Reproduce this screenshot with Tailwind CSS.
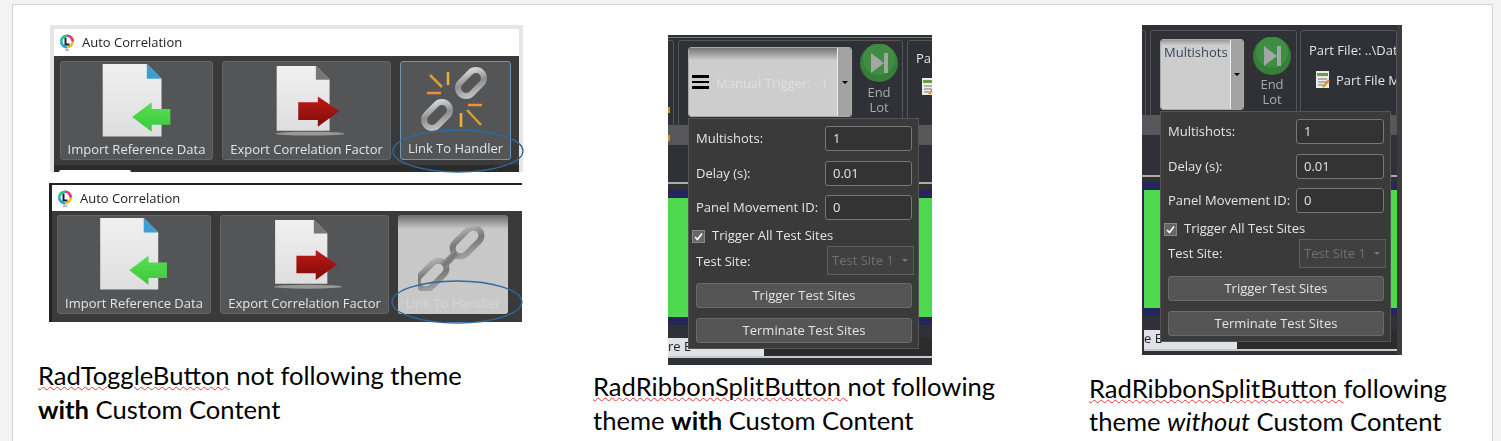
<!doctype html>
<html><head><meta charset="utf-8"><script src="https://cdn.jsdelivr.net/npm/@tailwindcss/browser@4"></script></head>
<body class="w-[1501px] h-[441px] overflow-hidden bg-[#f3f3f3]">
<svg width="0" height="0" class="absolute"><defs>
<linearGradient id="pg" x1="0" y1="0" x2="0" y2="1"><stop offset="0" stop-color="#f0f0f0"/><stop offset="1" stop-color="#dedede"/></linearGradient>
<linearGradient id="gr" x1="0" y1="0" x2="0" y2="1"><stop offset="0" stop-color="#58e050"/><stop offset="1" stop-color="#3cc83c"/></linearGradient>
<linearGradient id="rd" x1="0" y1="0" x2="0" y2="1"><stop offset="0" stop-color="#c01a14"/><stop offset="1" stop-color="#7c0c0a"/></linearGradient>
<linearGradient id="ch" x1="0" y1="0" x2="1" y2="1"><stop offset="0" stop-color="#dcdcdc"/><stop offset=".5" stop-color="#8e8e8e"/><stop offset="1" stop-color="#c4c4c4"/></linearGradient>
<linearGradient id="ch2" x1="0" y1="0" x2="1" y2="1"><stop offset="0" stop-color="#b4b4b4"/><stop offset=".5" stop-color="#767676"/><stop offset="1" stop-color="#a4a4a4"/></linearGradient>
<symbol id="logo" viewBox="0 0 16 18"><circle cx="8" cy="7.5" r="7" fill="#f0c020"/><path d="M8 .5A7 7 0 0 0 1 7.5h7z" fill="#22c4a0"/><path d="M8 .5A7 7 0 0 1 15 7.5H8z" fill="#e8308c"/><path d="M1 7.5A7 7 0 0 0 8 14.5V7.5z" fill="#20a8e8"/><circle cx="8" cy="7.5" r="4.4" fill="#fff"/><path d="M6.5 3.5v7h4" fill="none" stroke="#222" stroke-width="2"/><rect x="6" y="15" width="4" height="2" fill="#bbb"/></symbol>
<symbol id="imp" viewBox="0 0 72 76"><path d="M0 0H45L60 15V74H0z" fill="url(#pg)"/><path d="M45 0L60 15H45z" fill="#3b9ed6"/><path d="M30 54L50 39V46H69V62H50V69z" fill="url(#gr)"/></symbol>
<symbol id="exp" viewBox="0 0 72 76"><path d="M2 0H42L56 14V66H2z" fill="url(#pg)"/><path d="M42 0L56 14H42z" fill="#777"/><path d="M24 37H44V31L66 46L44 62V55H24z" fill="url(#rd)"/><ellipse cx="36" cy="69" rx="35" ry="2" fill="#999"/></symbol>
<symbol id="broken" viewBox="0 0 70 70" fill="none"><g stroke="url(#ch)" stroke-width="6"><rect x="-8" y="-15" width="16" height="30" rx="8" transform="translate(50 20) rotate(45)"/><rect x="-8" y="-15" width="16" height="30" rx="8" transform="translate(16 52) rotate(45)"/></g><g stroke-width="2.5"><path d="M9 12L21 24" stroke="#d8a030"/><path d="M27 9V22" stroke="#e8b040"/><path d="M6 30H20" stroke="#f09030"/><path d="M47 42H61" stroke="#f09030"/><path d="M46 47L60 62" stroke="#d8a030"/><path d="M40 50V64" stroke="#e8b040"/></g></symbol>
<symbol id="chain" viewBox="0 0 70 70" fill="none"><g stroke="url(#ch2)" stroke-width="6"><rect x="-8" y="-17" width="16" height="34" rx="8" transform="translate(49 21) rotate(45)"/><rect x="-8" y="-17" width="16" height="34" rx="8" transform="translate(14 54) rotate(45)"/><path d="M25 45L38 32" stroke-width="7"/></g></symbol>
<symbol id="play" viewBox="0 0 38 38"><circle cx="19" cy="19" r="19" fill="#357f39"/><circle cx="19" cy="15" r="16" fill="#4a9c4c" opacity=".5"/><path d="M11 9L24 19L11 29z" fill="#a3a7a3"/><rect x="24" y="9" width="4" height="20" fill="#a3a7a3"/></symbol>
<symbol id="pf" viewBox="0 0 14 18"><rect width="13" height="17" fill="#ececec"/><rect x="1" y="2" width="11" height="3" fill="#6a9e3a"/><path d="M2 8H11M2 11H11M2 14H7" stroke="#777"/><path d="M7 16L13 9" stroke="#e09020" stroke-width="2.4"/></symbol>
</defs></svg>

<main class="relative w-full h-full font-['Open_Sans',sans-serif]">
  <div class="absolute left-[12px] top-[4px] w-[1481px] h-[437px] bg-white border border-b-0 border-[#d2d2d2]"></div>

  <!-- Picture 1 -->
  <section class="absolute left-[50px] top-[25px] w-[473px] h-[147px] bg-[#e6e6e6] p-[4px] pb-0 flex flex-col blur-[0.4px]">
    <header class="h-[27px] bg-white flex items-center gap-[7px] pl-[5px] pt-[1px] text-[13px] text-[#222] shrink-0 rounded-t-[2px]"><svg width="16" height="18"><use href="#logo"/></svg>Auto Correlation</header>
    <div class="flex-1 bg-[#3a3a3a] pl-[6px] pt-[5px] relative">
      <div class="flex gap-[9px]">
        <button class="w-[153px] h-[99px] rounded-[3px] bg-[#545557] border border-[#656565] flex flex-col items-center text-[13px] text-[#e4e4e4]"><svg width="72" height="76" class="mt-[2px] ml-[2px]"><use href="#imp"/></svg><span class="mt-[1px]">Import Reference Data</span></button>
        <button class="w-[169px] h-[99px] rounded-[3px] bg-[#545557] border border-[#656565] flex flex-col items-center text-[13px] text-[#e4e4e4]"><svg width="72" height="76" class="mt-[4px] ml-[6px]"><use href="#exp"/></svg><span class="-mt-[1px]">Export Correlation Factor</span></button>
        <button class="w-[111px] h-[99px] rounded-[3px] bg-[#545557] border border-[#6f95b4] flex flex-col items-center text-[13px] text-[#e4e4e4]"><svg width="70" height="70" class="mt-[1px]"><use href="#broken"/></svg><span class="mt-[6px]">Link To Handler</span></button>
      </div>
      <div class="absolute left-0 right-0 bottom-0 h-[7px] bg-[#2b2b2b]"><div class="ml-[5px] mt-[5px] w-[72px] h-[2px] bg-white rounded-t-[2px]"></div></div>
    </div>
  </section>

  <!-- Picture 2 -->
  <section class="absolute left-[49px] top-[183px] w-[473px] h-[139px] bg-[#222] pl-[3px] pt-[2px] flex flex-col blur-[0.4px]">
    <header class="h-[26px] bg-white flex items-center gap-[7px] pl-[5px] pt-[1px] text-[13px] text-[#222] shrink-0"><svg width="16" height="18"><use href="#logo"/></svg>Auto Correlation</header>
    <div class="flex-1 bg-[#3a3a3a] pl-[5px] pt-[4px]">
      <div class="flex gap-[9px]">
        <button class="w-[154px] h-[99px] rounded-[3px] bg-[#545557] border border-[#656565] flex flex-col items-center text-[13px] text-[#e4e4e4]"><svg width="72" height="76" class="mt-[2px] ml-[2px]"><use href="#imp"/></svg><span class="mt-[2px]">Import Reference Data</span></button>
        <button class="w-[169px] h-[99px] rounded-[3px] bg-[#545557] border border-[#656565] flex flex-col items-center text-[13px] text-[#e4e4e4]"><svg width="72" height="76" class="mt-[4px] ml-[6px]"><use href="#exp"/></svg><span>Export Correlation Factor</span></button>
        <button class="w-[110px] h-[99px] rounded-[3px] bg-gradient-to-b from-[#6c6c6c] via-[#c8c8c8] via-[14%] to-[#c8c8c8] flex flex-col items-center text-[13px] text-[#d6d6d6]"><svg width="70" height="70" class="mt-[6px]"><use href="#chain"/></svg><span class="mt-[3px]">Link To Handler</span></button>
      </div>
    </div>
  </section>

  <!-- Handler ellipses -->
  <svg class="absolute left-[385px] top-[120px] w-[145px] h-[210px]" viewBox="0 0 145 210" fill="none" stroke="#2f6a9e" stroke-width="1.3"><ellipse cx="73" cy="31" rx="65" ry="21"/><ellipse cx="72" cy="182" rx="65" ry="21"/></svg>

  <!-- Picture 3 -->
  <section class="absolute left-[668px] top-[35px] w-[264px] h-[330px] bg-[#2f3136] overflow-hidden text-[13px] text-[#e4e4e4] blur-[0.4px]">
    <div class="absolute inset-x-0 top-[2px] h-px bg-[#777]"></div>
    <div class="absolute inset-x-0 top-[90px] h-[20px] bg-[#58585a]"></div>
    <div class="absolute left-[-8px] top-[5px] w-[14px] h-[105px] border border-[#555] rounded-[3px]"></div>
    <div class="absolute left-0 top-[72px] w-[2px] h-[6px] bg-[#d08a20]"></div>
    <div class="absolute left-0 top-[100px] w-[2px] h-[6px] bg-[#d08a20]"></div>
    <div class="absolute left-[10px] top-[5px] w-[225px] h-[105px] border border-[#555] rounded-[3px]"></div>
    <div class="absolute left-[239px] top-[5px] w-[40px] h-[105px] border border-[#555] rounded-[3px] pl-[8px] pt-[8px]">Pa<svg width="14" height="18" class="mt-[9px] ml-[6px]"><use href="#pf"/></svg></div>
    <div class="absolute left-[20px] top-[12px] w-[164px] h-[70px] flex rounded-[3px] overflow-hidden border border-[#aaa]">
      <div class="flex-1 flex items-center gap-[7px] pl-[3px] bg-gradient-to-b from-[#777] via-[#cdcdcd] via-[18%] to-[#cdcdcd] text-[#dfdfdf]">
        <div class="w-[17px] flex flex-col gap-[3px]"><i class="block h-[2.5px] bg-black"></i><i class="block h-[2.5px] bg-black"></i><i class="block h-[2.5px] bg-black"></i></div>
        <span class="whitespace-pre pt-[3px]">Manual Trigger:   1</span>
      </div>
      <div class="w-[14px] bg-[#a2a2a2] border-l border-[#eee] flex items-center justify-center"><i class="block border-x-[3px] border-x-transparent border-t-[3px] border-t-black"></i></div>
    </div>
    <div class="absolute left-[192px] top-[9px] w-[38px] flex flex-col items-center text-[#aaa] leading-[15px]"><svg width="38" height="38" class="mb-[3px]"><use href="#play"/></svg><span>End</span><span>Lot</span></div>
    <div class="absolute inset-x-0 top-[147px] h-[2px] bg-[#aaa]"></div>
    <div class="absolute inset-x-0 top-[155px] h-[135px] bg-[#25265a] py-[8px]"><div class="h-full bg-[#4fd94f]"></div></div>
    <div class="absolute left-0 top-[303px] w-[96px] h-[18px] bg-[#dfe3e8] text-[#222] leading-[16px] whitespace-nowrap">re E</div>
    <div class="absolute left-[96px] top-[303px] right-0 h-[18px] bg-[#2c2c2c]"></div>
    <div class="absolute inset-x-0 top-[321px] h-[2px] bg-[#c8c8c8]"></div>
    <div class="absolute left-[20px] top-[83px] w-[231px] h-[231px] bg-[#3a3a3a] border border-[#555] pt-[7px] pl-[7px] pr-[6px]">
      <div class="flex items-center justify-between h-[25px]"><span>Multishots:</span><span class="w-[87px] h-full leading-[23px] pl-[7px] border border-[#777] rounded-[3px] bg-[#333]">1</span></div>
      <div class="flex items-center justify-between h-[25px] mt-[10px]"><span>Delay (s):</span><span class="w-[87px] h-full leading-[23px] pl-[7px] border border-[#777] rounded-[3px] bg-[#333]">0.01</span></div>
      <div class="flex items-center justify-between h-[25px] mt-[9px]"><span>Panel Movement ID:</span><span class="w-[87px] h-full leading-[23px] pl-[7px] border border-[#777] rounded-[3px] bg-[#333]">0</span></div>
      <div class="flex items-center gap-[7px] h-[18px] mt-[7px] -ml-[4px]"><span class="w-[13px] h-[13px] bg-[#666] border border-[#888] flex items-center justify-center"><svg width="9" height="9" viewBox="0 0 9 9"><path d="M1 5L3.5 7.5L8 1.5" fill="none" stroke="#fff" stroke-width="1.6"/></svg></span>Trigger All Test Sites</div>
      <div class="flex items-center justify-between h-[29px] mt-[1px] -mr-[2px]"><span class="pt-[3px]">Test Site:</span><span class="w-[87px] h-full leading-[27px] pl-[4px] pr-[5px] border border-[#5e5e5e] bg-[#404040] text-[#707070] flex items-center justify-between">Test Site 1<i class="block border-x-[3px] border-x-transparent border-t-[3px] border-t-[#777]"></i></span></div>
      <div class="h-[25px] mt-[8px] leading-[23px] text-center rounded-[3px] border border-[#6a6a6a] bg-[#555]">Trigger Test Sites</div>
      <div class="h-[25px] mt-[10px] leading-[23px] text-center rounded-[3px] border border-[#6a6a6a] bg-[#555]">Terminate Test Sites</div>
    </div>
  </section>

  <!-- Picture 4 -->
  <section class="absolute left-[1142px] top-[25px] w-[260px] h-[330px] bg-[#2f3136] overflow-hidden text-[13px] text-[#e4e4e4] blur-[0.4px]">
    <div class="absolute right-0 inset-y-0 w-[5px] bg-[#3c3c3c]"></div>
    <div class="absolute left-0 right-[5px] top-[90px] h-[20px] bg-[#58585a]"></div>
    <div class="absolute left-[-8px] top-[5px] w-[12px] h-[105px] border border-[#555] rounded-[3px]"></div>
    <div class="absolute left-[8px] top-[5px] w-[147px] h-[105px] border border-[#555] rounded-[3px]"></div>
    <div class="absolute left-[158px] top-[5px] w-[97px] h-[105px] border border-[#555] rounded-[3px] pl-[8px] pt-[10px] overflow-hidden whitespace-nowrap">
      <div>Part File: ..\Dat</div>
      <div class="flex items-center gap-[6px] mt-[10px] ml-[7px]"><svg width="14" height="18" class="shrink-0"><use href="#pf"/></svg><span>Part File M</span></div>
    </div>
    <div class="absolute left-[18px] top-[14px] w-[84px] h-[71px] flex rounded-[3px] overflow-hidden border border-[#aaa]">
      <div class="flex-1 pl-[3px] pt-[3px] bg-gradient-to-b from-[#999] via-[#cdcdcd] via-[8%] to-[#cdcdcd] text-[#36465c]">Multishots</div>
      <div class="w-[13px] bg-[#a2a2a2] border-l border-[#eee] flex items-center justify-center"><i class="block border-x-[3px] border-x-transparent border-t-[3px] border-t-black"></i></div>
    </div>
    <div class="absolute left-[111px] top-[12px] w-[38px] flex flex-col items-center text-[#aaa] leading-[15px]"><svg width="38" height="38" class="mb-[2px]"><use href="#play"/></svg><span>End</span><span>Lot</span></div>
    <div class="absolute left-0 right-[5px] top-[150px] h-[2px] bg-[#aaa]"></div>
    <div class="absolute left-0 right-[5px] top-[157px] h-[134px] bg-[#25265a] py-[8px]"><div class="h-full bg-[#4fd94f] ml-[2px]"></div></div>
    <div class="absolute left-[2px] top-[305px] w-[93px] h-[19px] bg-[#dfe3e8] text-[#222] leading-[17px] whitespace-nowrap">e E</div>
    <div class="absolute left-[95px] top-[305px] right-[5px] h-[19px] bg-[#2c2c2c]"></div>
    <div class="absolute left-[2px] right-[5px] top-[324px] h-[2px] bg-[#c8c8c8]"></div>
    <div class="absolute left-[18px] top-[86px] w-[231px] h-[231px] bg-[#3a3a3a] border border-[#555] pt-[7px] pl-[7px] pr-[6px]">
      <div class="flex items-center justify-between h-[25px]"><span>Multishots:</span><span class="w-[88px] h-full leading-[23px] pl-[7px] border border-[#777] rounded-[3px] bg-[#333]">1</span></div>
      <div class="flex items-center justify-between h-[25px] mt-[10px]"><span>Delay (s):</span><span class="w-[88px] h-full leading-[23px] pl-[7px] border border-[#777] rounded-[3px] bg-[#333]">0.01</span></div>
      <div class="flex items-center justify-between h-[25px] mt-[9px]"><span>Panel Movement ID:</span><span class="w-[88px] h-full leading-[23px] pl-[7px] border border-[#777] rounded-[3px] bg-[#333]">0</span></div>
      <div class="flex items-center gap-[7px] h-[18px] mt-[7px] -ml-[4px]"><span class="w-[13px] h-[13px] bg-[#666] border border-[#888] flex items-center justify-center"><svg width="9" height="9" viewBox="0 0 9 9"><path d="M1 5L3.5 7.5L8 1.5" fill="none" stroke="#fff" stroke-width="1.6"/></svg></span>Trigger All Test Sites</div>
      <div class="flex items-center justify-between h-[29px] mt-[1px] -mr-[2px]"><span class="pt-[1px]">Test Site:</span><span class="w-[87px] h-full leading-[27px] pl-[4px] pr-[5px] border border-[#5e5e5e] bg-[#404040] text-[#707070] flex items-center justify-between">Test Site 1<i class="block border-x-[3px] border-x-transparent border-t-[3px] border-t-[#777]"></i></span></div>
      <div class="h-[25px] mt-[8px] leading-[23px] text-center rounded-[3px] border border-[#6a6a6a] bg-[#555]">Trigger Test Sites</div>
      <div class="h-[25px] mt-[10px] leading-[23px] text-center rounded-[3px] border border-[#6a6a6a] bg-[#555]">Terminate Test Sites</div>
    </div>
  </section>

  <!-- Captions -->
  <p class="absolute left-[38px] top-[358px] text-[25.6px] leading-[34px] text-black font-['Lato',sans-serif] whitespace-nowrap"><span class="underline decoration-wavy decoration-[#e23b3b] decoration-1">RadToggleButton</span> not following theme<br><b>with</b> Custom Content</p>
  <p class="absolute left-[593px] top-[369px] text-[25.6px] leading-[34px] text-black font-['Lato',sans-serif] whitespace-nowrap"><span class="underline decoration-wavy decoration-[#e23b3b] decoration-1">RadRibbonSplitButton </span>not following<br>theme <b>with</b> Custom Content</p>
  <p class="absolute left-[1089px] top-[372px] text-[25.6px] leading-[33px] text-black font-['Lato',sans-serif] whitespace-nowrap"><span class="underline decoration-wavy decoration-[#e23b3b] decoration-1">RadRibbonSplitButton </span>following<br>theme <i>without</i> Custom Content</p>
</main>
</body></html>
